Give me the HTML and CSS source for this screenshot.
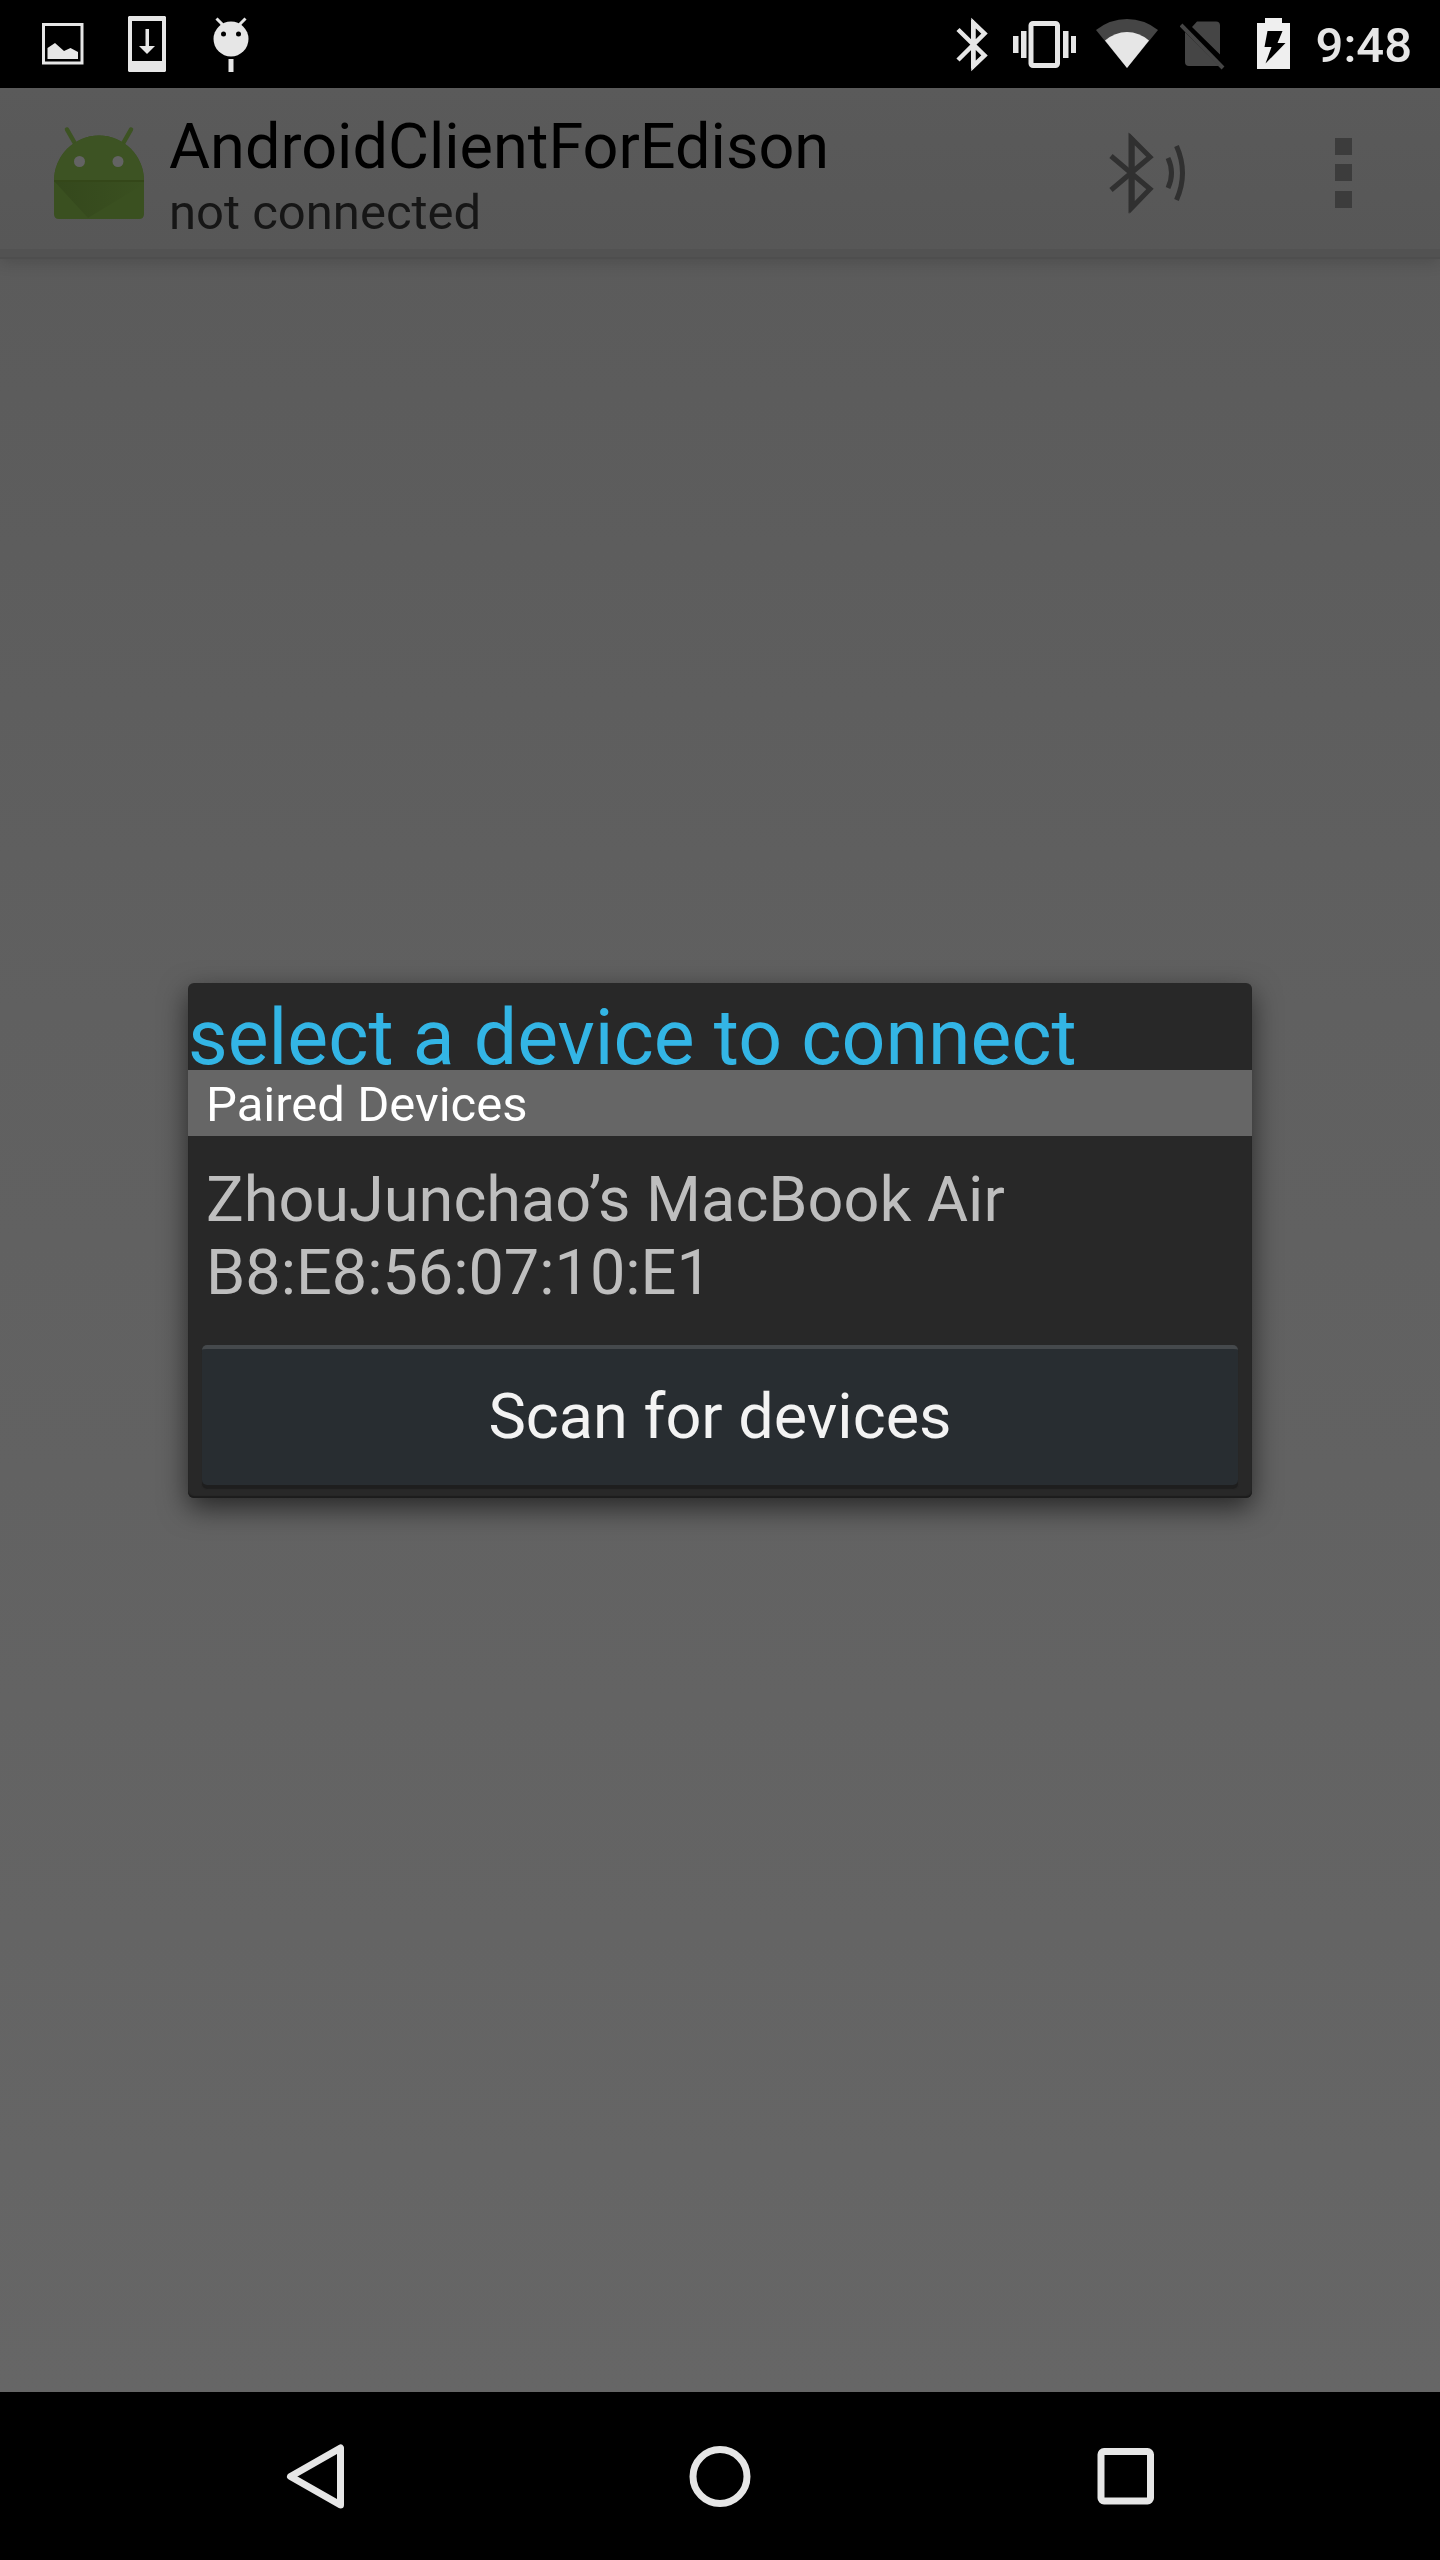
FILE: index.html
```html
<!DOCTYPE html>
<html lang="en">
<head>
  <meta charset="utf-8">
  <meta name="viewport" content="width=device-width, initial-scale=1">
  <title>AndroidClientForEdison</title>
  <link rel="stylesheet" href="styles.css">
</head>
<body>
  <div class="status-bar">
    <div class="notifications">
      <svg width="42" height="88" viewBox="42 0 42 88" aria-hidden="true">
        <path d="M43.500 24.500h38.500v38.500h-38.500z" fill="none" stroke="#e6e6e6" stroke-width="3"/>
        <path d="M47.500 48l7.500-5 9 8 6.500-3 7.500 4v7h-30.500z" fill="#e6e6e6"/>
      </svg>
      <svg width="40" height="88" viewBox="128 0 40 88" aria-hidden="true">
        <path fill-rule="evenodd" d="M129 16h36l1 1v54l-1 1h-36l-1-1v-54zM132 21v40h30v-40z" fill="#e6e6e6"/>
        <path d="M145.500 29h3.500v17h6l-8 8-8-8h6.500z" fill="#e6e6e6"/>
      </svg>
      <svg width="38" height="88" viewBox="212 0 38 88" aria-hidden="true">
        <circle cx="231" cy="39" r="17.500" fill="#e6e6e6"/>
        <path d="M216.500 18.500l6 6M245.500 18.500l-6 6" stroke="#e6e6e6" stroke-width="3"/>
        <path d="M231 59v13" stroke="#e6e6e6" stroke-width="5"/>
        <circle cx="223.500" cy="34" r="2.500"/><circle cx="238.500" cy="34" r="2.500"/>
      </svg>
    </div>
    <div class="system">
      <svg width="36" height="88" viewBox="956 0 36 88" aria-hidden="true">
        <path d="M958 29.500L984.500 55.500 973.500 66V23L984.500 33.500 958 60" fill="none" stroke="#e6e6e6" stroke-width="4.500"/>
        <path d="M971 20h3v48.500h-3z" fill="#e6e6e6"/>
      </svg>
      <svg width="64" height="88" viewBox="1012 0 64 88" aria-hidden="true">
        <rect x="1031" y="23.500" width="26.500" height="42" rx="2" fill="none" stroke="#e6e6e6" stroke-width="5"/>
        <path d="M1013 36h5.500v17h-5.500zM1021 31h5.500v27h-5.500zM1063 31h5.500v27h-5.500zM1071 36h5v17h-5z" fill="#e6e6e6"/>
      </svg>
      <svg width="64" height="88" viewBox="1096 0 64 88" aria-hidden="true">
        <path d="M1127 68L1096 30Q1110 19 1127 19T1158 30z" fill="#454545"/>
        <path d="M1127 68L1105 40.500Q1115 32 1127 32T1149 40.500z" fill="#e6e6e6"/>
      </svg>
      <svg width="56" height="88" viewBox="1180 0 56 88" aria-hidden="true">
        <path d="M1185 32l34 34h-30q-4 0-4-4zM1192 27l5-5.500h19q4 0 4 4v29z" fill="#454545"/>
        <path d="M1181 25l42 43" stroke="#454545" stroke-width="4"/>
      </svg>
      <svg width="40" height="88" viewBox="1256 0 40 88" aria-hidden="true">
        <path d="M1265 18h17v5h8v46h-33v-46h8z" fill="#efefef"/>
        <path d="M1267.500 31h15l-5 12h8l-20 20.500 6-16.500h-7z" fill="#000"/>
      </svg>
      <time class="clock">9:48</time>
    </div>
  </div>

  <div class="app">
    <header class="action-bar">
      <svg class="app-icon" width="96" height="100" viewBox="51 121 96 100" aria-hidden="true">
        <defs>
          <linearGradient id="fold" x1="0" y1="0" x2="1" y2="0">
            <stop offset="0" stop-color="#304219"/>
            <stop offset="1" stop-color="#3a5020"/>
          </linearGradient>
        </defs>
        <path d="M67 127.500l8 14M131 127.500l-8 14" stroke="#3d5323" stroke-width="4.500" stroke-linecap="round"/>
        <path d="M54 179a45 45.500 0 0 1 90 0v33q0 5-5 5H59q-5 0-5-5z" fill="#3a5020"/>
        <path d="M54 179a45 45.500 0 0 1 90 0z" fill="#3d5323"/>
        <path d="M54 179h90v3L88 216z" fill="url(#fold)" opacity=".6"/>
        <path d="M54 179h90" stroke="#344719" stroke-width="2"/>
        <circle cx="79.500" cy="159.500" r="5.500" fill="#636363"/><circle cx="118" cy="159.500" r="5.500" fill="#636363"/>
      </svg>
      <div class="titles">
        <h1 class="title">AndroidClientForEdison</h1>
        <p class="subtitle">not connected</p>
      </div>
      <button class="action" type="button" aria-label="Connect a device">
        <svg width="80" height="84" viewBox="1107 130 80 84" aria-hidden="true">
          <path d="M1110 155l39 33-18 18.500V138l18 18-39 33" fill="none" stroke="#303030" stroke-width="5"/>
          <path d="M1127.500 131.500l6 6v69l-6 6z" fill="#303030"/>
          <path d="M1167 157q7 15 0 30M1175.500 145q12 27 0 54" fill="none" stroke="#303030" stroke-width="5"/>
        </svg>
      </button>
      <button class="action" type="button" aria-label="More options">
        <svg width="20" height="72" viewBox="1333 136 20 72" aria-hidden="true">
          <path d="M1334 137h17v17h-17zM1334 163h17v17h-17zM1334 190h17v17h-17z" fill="#3c3c3c"/>
        </svg>
      </button>
    </header>

    <div class="overlay">
      <section class="dialog" role="dialog" aria-labelledby="dialog-title">
        <h2 class="dialog-title" id="dialog-title">select a device to connect</h2>
        <h3 class="group-title">Paired Devices</h3>
        <ul class="devices">
          <li class="device">ZhouJunchao’s MacBook Air<br>B8:E8:56:07:10:E1</li>
        </ul>
        <button class="scan" type="button">Scan for devices</button>
      </section>
    </div>
  </div>

  <nav class="nav-bar" aria-label="System">
    <button class="nav-button" type="button" aria-label="Back">
      <svg width="80" height="80" viewBox="274 2436 80 80" aria-hidden="true">
        <path d="M340.500 2448v57L290.500 2476.500z" fill="none" stroke="#e6e6e6" stroke-width="7" stroke-linejoin="round"/>
      </svg>
    </button>
    <button class="nav-button" type="button" aria-label="Home">
      <svg width="80" height="80" viewBox="0 0 80 80" aria-hidden="true">
        <circle cx="40" cy="40.500" r="27" fill="none" stroke="#e6e6e6" stroke-width="7"/>
      </svg>
    </button>
    <button class="nav-button" type="button" aria-label="Recent apps">
      <svg width="80" height="80" viewBox="0 0 80 80" aria-hidden="true">
        <rect x="15" y="15.500" width="49.500" height="49.500" rx="3" fill="none" stroke="#e6e6e6" stroke-width="7"/>
      </svg>
    </button>
  </nav>
</body>
</html>
```
FILE: styles.css
```css
* {
  box-sizing: border-box;
}

body {
  display: flex;
  flex-direction: column;
  min-height: 100vh;
  margin: 0;
  background: #000;
  font-family: Roboto, "Liberation Sans", sans-serif;
}

h1, h2, h3, p, ul {
  margin: 0;
  padding: 0;
  font-weight: 400;
  list-style: none;
}

button {
  padding: 0;
  border: 0;
  background: none;
  font: inherit;
}

svg {
  display: block;
  flex: none;
}

/* Status bar */
.status-bar {
  display: flex;
  justify-content: space-between;
  height: 88px;
  padding: 0 28px 0 42px;
}

.notifications {
  display: flex;
  gap: 44px;
}

.system {
  display: flex;
  gap: 20px;
}

.clock {
  min-width: 96px;
  color: #e6e6e6;
  font-size: 49px;
  font-weight: 500;
  line-height: 92px;
}

/* App window, dimmed behind the dialog */
.app {
  position: relative;
  flex: 1;
  background: linear-gradient(#5a5a5a, #606060 40%, #666);
}

.action-bar {
  display: flex;
  align-items: center;
  height: 171px;
  padding: 0 86px 0 51px;
  border-bottom: 2px solid #4e4e4e;
  background: linear-gradient(#5a5a5a, #575757 161px, #525252 161px);
  box-shadow: 0 4px 14px rgba(0, 0, 0, .14);
}

.titles {
  flex: 1;
  padding: 6px 0 0 22px;
}

.title {
  font-size: 63px;
  line-height: 74px;
}

.subtitle {
  color: #161616;
  font-size: 49px;
  line-height: 58px;
}

.action + .action {
  margin-left: 146px;
}

/* Device picker */
.overlay {
  position: absolute;
  inset: 0;
  display: grid;
  align-items: center;
  padding: 0 188px;
}

.dialog {
  padding-bottom: 13px;
  border-radius: 6px;
  background: #282828;
  box-shadow: 0 10px 28px rgba(0, 0, 0, .6), inset 0 -2px 1px #1c1c1c;
}

.dialog-title {
  padding-top: 23px;
  color: #33b5e5;
  font-size: 77px;
  line-height: 64px;
}

.group-title {
  padding: 4px 18px 0;
  background: #666;
  color: #fff;
  font-size: 49px;
  line-height: 62px;
}

.device {
  padding: 27px 18px 36px;
  color: #bebebe;
  font-size: 63px;
  line-height: 73px;
}

.scan {
  display: block;
  width: calc(100% - 28px);
  height: 140px;
  margin: 0 14px;
  border-top: 4px solid #45494c;
  border-radius: 5px;
  background: #282d31;
  box-shadow: 0 4px 1px #1e1e1e;
  color: #f3f3f3;
  font-size: 63px;
}

/* Navigation bar */
.nav-bar {
  display: flex;
  justify-content: center;
  height: 168px;
}

.nav-button {
  display: grid;
  flex: 0 1 406px;
  place-items: center;
}
```
